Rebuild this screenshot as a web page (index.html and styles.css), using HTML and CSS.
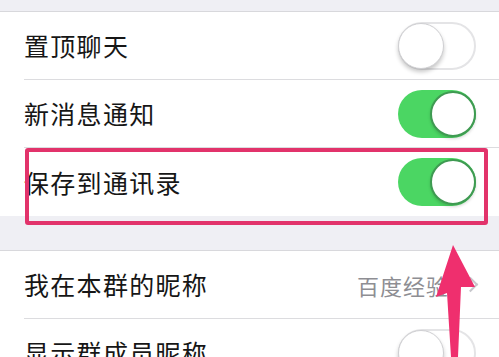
FILE: index.html
```html
<!DOCTYPE html>
<html lang="zh-CN">
<head>
<meta charset="utf-8">
<link rel="stylesheet" href="styles.css">
</head>
<body>
<div class="screen">
  <div class="band band-top"></div>
  <div class="group">
    <div class="row"><span class="label">置顶聊天</span><span class="switch off"><span class="knob"></span></span></div>
    <div class="row"><span class="label">新消息通知</span><span class="switch on"><span class="knob"></span></span></div>
    <div class="row last"><span class="label">保存到通讯录</span><span class="switch on"><span class="knob"></span></span></div>
  </div>
  <div class="band band-mid"></div>
  <div class="group">
    <div class="row"><span class="label">我在本群的昵称</span><span class="detail">百度经验<span class="chev"></span></span></div>
    <div class="row"><span class="label">显示群成员昵称</span><span class="switch off"><span class="knob"></span></span></div>
  </div>
  <div class="highlight"></div>
  <svg class="arrow" width="499" height="357" viewBox="0 0 499 357">
    <polygon points="453,245 475,287 461,287 458,357 451,357 447,293 436,297" fill="#ef2f6e"/>
  </svg>
</div>
</body>
</html>
```
FILE: styles.css
```css
* { box-sizing: border-box; }
html, body { margin: 0; padding: 0; }
body {
  width: 499px;
  height: 357px;
  overflow: hidden;
  background: #ffffff;
  font-family: "Noto Sans CJK SC", "Noto Sans", sans-serif;
}
.screen {
  position: relative;
  width: 499px;
  height: 357px;
  overflow: hidden;
}
.band {
  background: #efeff4;
  border-bottom: 1px solid #d8d8dc;
}
.band-top { height: 12px; }
.band-mid { height: 35px; }
.group { background: #fff; }
.row {
  height: 68px;
  margin-left: 24px;
  padding-right: 23px;
  display: flex;
  align-items: center;
  justify-content: space-between;
  border-bottom: 1px solid #dcdcdf;
}
.row.last { border-bottom: 0; }
.label {
  font-size: 25px;
  color: #161616;
  letter-spacing: 1.3px;
  line-height: 1;
}
.switch {
  position: relative;
  width: 78px;
  height: 48px;
  border-radius: 24px;
  flex: none;
}
.switch.off {
  background: #fff;
  border: 2px solid #e4e4e6;
}
.switch.on {
  background: #4bd663;
}
.knob {
  position: absolute;
  top: 0;
  width: 46px;
  height: 46px;
  border-radius: 50%;
  background: #fff;
}
.switch.off .knob {
  left: -2px;
  top: -1px;
  border: 1px solid #cfcfd2;
  box-shadow: 0 3px 4px rgba(0,0,0,0.22);
}
.switch.on .knob {
  right: 0;
  top: 1px;
  border: 2px solid #3f9a52;
  box-shadow: 0 2px 3px rgba(0,0,0,0.15);
}
.detail {
  display: flex;
  align-items: center;
  font-size: 22px;
  color: #8e8e93;
  letter-spacing: 1px;
  margin-right: 0;
}
.chev {
  display: inline-block;
  width: 11px;
  height: 11px;
  border-top: 2px solid #c7c7cc;
  border-right: 2px solid #c7c7cc;
  transform: rotate(45deg);
  margin-left: 16px;
}
.highlight {
  position: absolute;
  left: 25px;
  top: 148px;
  width: 463px;
  height: 77px;
  border: 4px solid #e2336b;
  border-radius: 3px;
}
.arrow {
  position: absolute;
  left: 0;
  top: 0;
}
```
